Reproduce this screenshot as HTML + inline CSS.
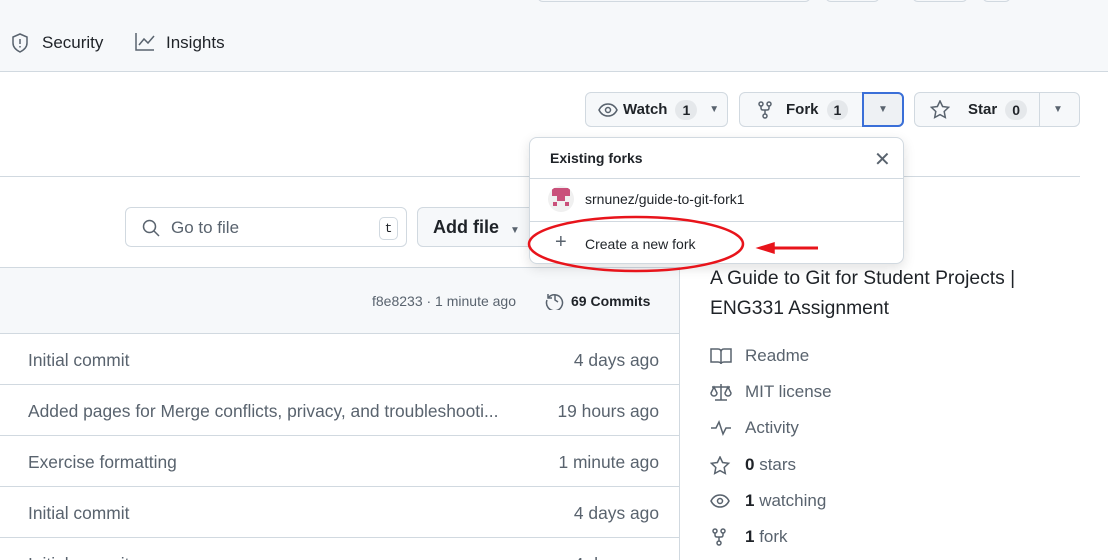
<!DOCTYPE html><html><head><style>
*{box-sizing:border-box;margin:0;padding:0}
html,body{width:1108px;height:560px;overflow:hidden}
body{background:#fff;font-family:"Liberation Sans",sans-serif;color:#1f2328;position:relative}
.a{position:absolute}
.btn{position:absolute;border:1px solid #d1d9e0;border-radius:6px;background:#f6f8fa;height:35px;font-size:15px;font-weight:bold;display:flex;align-items:center}
.cnt{background:#e5e8eb;border-radius:12px;padding:2px 7px;font-size:14px;margin-left:8px;font-weight:bold}
.row{position:absolute;left:0;width:680px;height:51px;border-top:1px solid #d1d9e0;font-size:17.4px;color:#59636e}
.row span{position:absolute;top:16px;white-space:nowrap}
.side{position:absolute;left:710px;font-size:17px;color:#59636e}
.side svg{position:absolute;left:0;top:1px}
.side span{position:absolute;left:35px;white-space:nowrap}
svg{fill:none;stroke:#59636e;stroke-width:1.5}
</style></head><body>
<div class="a" style="left:0;top:0;width:1108px;height:72px;background:#f6f8fa;border-bottom:1px solid #d1d9e0"></div>
<div class="a" style="left:537px;top:-10px;width:274px;height:12px;border:1px solid #d1d9e0;border-radius:6px"></div>
<div class="a" style="left:825px;top:-10px;width:55px;height:12px;border:1px solid #d1d9e0;border-radius:6px"></div>
<div class="a" style="left:912px;top:-10px;width:56px;height:12px;border:1px solid #d1d9e0;border-radius:6px"></div>
<div class="a" style="left:982px;top:-10px;width:29px;height:12px;border:1px solid #d1d9e0;border-radius:6px"></div>
<svg class="a" style="left:11px;top:33px" width="18" height="20" viewBox="0 0 18 20"><path d="M9 1L2 4v6c0 4 3 7 7 9 4-2 7-5 7-9V4z"/><path d="M9 6v5M9 13v1.5"/></svg>
<div class="a" style="left:42px;top:33px;font-size:17px">Security</div>
<svg class="a" style="left:135px;top:33px" width="20" height="18" viewBox="0 0 20 18"><path d="M1 0v17h18M4 12l5-6 4 4 6-7"/></svg>
<div class="a" style="left:166px;top:33px;font-size:17px">Insights</div>

<div class="btn" style="left:585px;top:92px;width:143px;padding-left:12px"><svg width="20" height="16" viewBox="0 0 20 16"><path d="M1 8c2-4 5-6 9-6s7 2 9 6c-2 4-5 6-9 6s-7-2-9-6z"/><circle cx="10" cy="8" r="2.5"/></svg><span style="margin-left:5px">Watch</span><span class="cnt">1</span><span style="margin-left:12px;font-size:10px;color:#59636e">▼</span></div>
<div class="btn" style="left:739px;top:92px;width:165px;padding-left:18px"><svg width="14" height="18" viewBox="0 0 14 18"><circle cx="3" cy="3" r="2"/><circle cx="11" cy="3" r="2"/><circle cx="7" cy="15" r="2"/><path d="M3 5v2c0 1.5 1 2 2 2h4c1 0 2-.5 2-2V5M7 9v4"/></svg><span style="margin-left:14px">Fork</span><span class="cnt">1</span></div>
<div class="a" style="left:862px;top:92px;width:42px;height:35px;border:2px solid #3a6fd8;border-radius:0 6px 6px 0;background:#eef1f4;text-align:center;font-size:10px;line-height:31px;color:#59636e">▼</div>
<div class="btn" style="left:914px;top:92px;width:166px;padding-left:15px"><svg width="20" height="19" viewBox="0 0 20 19"><path d="M10 1l2.6 5.5 6 .8-4.4 4.2 1.1 6L10 14.6 4.7 17.5l1.1-6L1.4 7.3l6-.8z"/></svg><span style="margin-left:18px">Star</span><span class="cnt">0</span><span style="position:absolute;left:124px;top:0;height:33px;border-left:1px solid #d1d9e0"></span><span style="position:absolute;left:138px;font-size:10px;color:#59636e">▼</span></div>

<div class="a" style="left:0;top:176px;width:1080px;border-top:1px solid #d1d9e0"></div>

<div class="a" style="left:125px;top:207px;width:282px;height:40px;border:1px solid #d1d9e0;border-radius:6px"></div>
<svg class="a" style="left:142px;top:219px" width="18" height="18" viewBox="0 0 18 18"><circle cx="7.5" cy="7.5" r="6"/><path d="M12 12l5 5"/></svg>
<div class="a" style="left:171px;top:218px;font-size:17px;color:#59636e">Go to file</div>
<div class="a" style="left:379px;top:217px;width:19px;height:23px;border:1px solid #d1d9e0;border-radius:5px;font-family:'Liberation Mono';font-size:13px;text-align:center;line-height:21px">t</div>
<div class="a" style="left:417px;top:207px;width:120px;height:40px;border:1px solid #d1d9e0;border-radius:6px;background:#f6f8fa;padding:9px 15px;font-size:18px;font-weight:bold">Add file <span style="font-size:10px;color:#59636e;margin-left:6px">▼</span></div>

<div class="a" style="left:0;top:267px;width:680px;height:300px;border-top:1px solid #d1d9e0;border-right:1px solid #d1d9e0"></div>
<div class="a" style="left:0;top:268px;width:679px;height:65px;background:#f6f8fa"></div>
<div class="a" style="left:372px;top:293px;font-size:14px;color:#59636e">f8e8233 · 1 minute ago</div>
<svg class="a" style="left:545px;top:290px" width="20" height="20" viewBox="0 0 20 20"><path d="M3 4v4h4"/><path d="M3.5 7.5A8 8 0 1 1 2 10"/><path d="M10 5v5l3 2"/></svg>
<div class="a" style="left:571px;top:293px;font-size:14px;font-weight:bold">69 Commits</div>
<div class="row" style="top:333px"><span style="left:28px">Initial commit</span><span style="right:21px">4 days ago</span></div>
<div class="row" style="top:384px"><span style="left:28px">Added pages for Merge conflicts, privacy, and troubleshooti...</span><span style="right:21px">19 hours ago</span></div>
<div class="row" style="top:435px"><span style="left:28px">Exercise formatting</span><span style="right:21px">1 minute ago</span></div>
<div class="row" style="top:486px"><span style="left:28px">Initial commit</span><span style="right:21px">4 days ago</span></div>
<div class="row" style="top:537px"><span style="left:28px">Initial commit</span><span style="right:21px">4 days ago</span></div>

<div class="a" style="left:710px;top:264px;font-size:19.3px;line-height:30px;color:#1f2328;white-space:nowrap">A Guide to Git for Student Projects |<br>ENG331 Assignment</div>
<div class="side" style="top:346px"><svg width="22" height="18" viewBox="0 0 22 18"><path d="M1 2h7c2 0 3 1 3 3v12c0-1-1-2-3-2H1zM21 2h-7c-2 0-3 1-3 3v12c0-1 1-2 3-2h7z"/></svg><span>Readme</span></div>
<div class="side" style="top:382px"><svg width="22" height="18" viewBox="0 0 22 18"><path d="M11 1v16M5 17h12M2 4h18M4 4l-3 6a3 3 0 0 0 6 0zM18 4l-3 6a3 3 0 0 0 6 0z"/></svg><span>MIT license</span></div>
<div class="side" style="top:418px"><svg width="22" height="18" viewBox="0 0 22 18"><path d="M1 9h5l3-6 4 12 3-6h5"/></svg><span>Activity</span></div>
<div class="side" style="top:455px"><svg width="22" height="20" viewBox="0 0 22 20"><path d="M10 1l2.6 5.5 6 .8-4.4 4.2 1.1 6L10 14.6 4.7 17.5l1.1-6L1.4 7.3l6-.8z"/></svg><span><b style="color:#1f2328">0</b> stars</span></div>
<div class="side" style="top:491px"><svg width="22" height="18" viewBox="0 0 22 18"><path d="M1 9c2-4 5-6 9-6s7 2 9 6c-2 4-5 6-9 6s-7-2-9-6z"/><circle cx="10" cy="9" r="2.5"/></svg><span><b style="color:#1f2328">1</b> watching</span></div>
<div class="side" style="top:527px"><svg width="22" height="18" viewBox="0 0 22 18"><circle cx="5" cy="3" r="2"/><circle cx="13" cy="3" r="2"/><circle cx="9" cy="15" r="2"/><path d="M5 5v2c0 1.5 1 2 2 2h4c1 0 2-.5 2-2V5M9 9v4"/></svg><span><b style="color:#1f2328">1</b> fork</span></div>

<div class="a" style="left:529px;top:137px;width:375px;height:127px;background:#fff;border:1px solid #d1d9e0;border-radius:8px;box-shadow:0 4px 12px rgba(0,0,0,.12)"></div>
<div class="a" style="left:550px;top:150px;font-size:14px;font-weight:bold">Existing forks</div>
<div class="a" style="left:874px;top:147px;font-size:20px;color:#59636e">✕</div>
<div class="a" style="left:530px;top:178px;width:373px;border-top:1px solid #d1d9e0"></div>
<div class="a" style="left:548px;top:186px;width:26px;height:26px;border-radius:50%;background:#f0f0f0;overflow:hidden"><div style="position:absolute;left:4px;top:2px;width:18px;height:8px;background:#c9507a"></div><div style="position:absolute;left:9px;top:10px;width:8px;height:5px;background:#c9507a"></div><div style="position:absolute;left:5px;top:16px;width:4px;height:4px;background:#c9507a"></div><div style="position:absolute;left:17px;top:16px;width:4px;height:4px;background:#c9507a"></div></div>
<div class="a" style="left:585px;top:191px;font-size:14px">srnunez/guide-to-git-fork1</div>
<div class="a" style="left:530px;top:221px;width:373px;border-top:1px solid #d1d9e0"></div>
<div class="a" style="left:555px;top:232px;font-size:20px;color:#59636e;line-height:20px">+</div>
<div class="a" style="left:585px;top:236px;font-size:14px">Create a new fork</div>
<svg class="a" style="left:520px;top:214px;overflow:visible" width="300" height="60"><ellipse cx="116" cy="30" rx="107" ry="27" stroke="#e8141b" stroke-width="2.5"/><path d="M250 34h48" stroke="#e8141b" stroke-width="3"/><path d="M238 34l16-5v10z" fill="#e8141b" stroke="#e8141b"/></svg>
</body></html>
